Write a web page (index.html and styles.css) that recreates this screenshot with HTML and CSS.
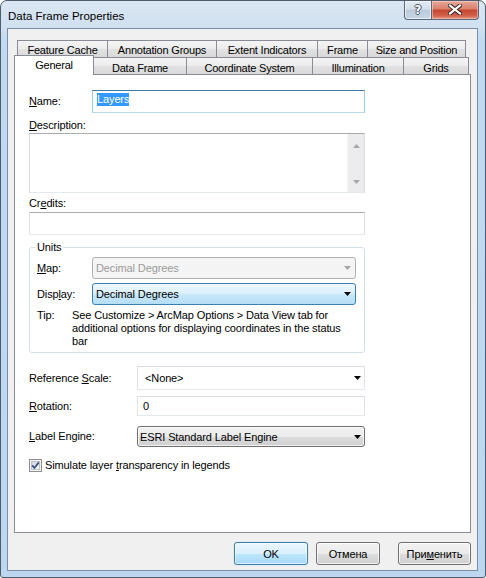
FILE: index.html
```html
<!DOCTYPE html>
<html>
<head>
<meta charset="utf-8">
<title>Data Frame Properties</title>
<link rel="stylesheet" href="styles.css">
</head>
<body>
<div class="window">
  <div class="titlebar">
    <span class="title">Data Frame Properties</span>
    <div class="caption">
      <div class="cb help"><span>?</span></div>
      <div class="cb close">
        <svg width="14" height="11" viewBox="0 0 14 11">
          <path d="M2 1.5 L12 9.5 M12 1.5 L2 9.5" stroke="#3d2a2a" stroke-width="4.2" stroke-linecap="square" fill="none"/>
          <path d="M2 1.5 L12 9.5 M12 1.5 L2 9.5" stroke="#ffffff" stroke-width="2.2" stroke-linecap="square" fill="none"/>
        </svg>
      </div>
    </div>
  </div>
  <div class="client">
    <div class="tabs">
      <div class="tab-row back">
        <div class="tab w-fc">Feature Cache</div>
        <div class="tab w-ag">Annotation Groups</div>
        <div class="tab w-ei">Extent Indicators</div>
        <div class="tab w-fr">Frame</div>
        <div class="tab w-sp">Size and Position</div>
      </div>
      <div class="tab-row front">
        <div class="tab sel w-ge">General</div>
        <div class="tab w-df">Data Frame</div>
        <div class="tab w-cs">Coordinate System</div>
        <div class="tab w-il">Illumination</div>
        <div class="tab w-gr">Grids</div>
      </div>
    </div>
    <div class="panel">
      <div class="row name-row">
        <span class="lbl lbl-name"><u>N</u>ame:</span>
        <div class="textbox focus name-input"><span class="selected">Layers</span></div>
      </div>
      <div class="caption-lbl desc-lbl"><u>D</u>escription:</div>
      <div class="textbox memo">
        <div class="scrollbar">
          <svg width="7" height="4" viewBox="0 0 7 4"><polygon points="0,4 7,4 3.5,0" fill="#a8a8a8"/></svg>
          <svg width="7" height="4" viewBox="0 0 7 4"><polygon points="0,0 7,0 3.5,4" fill="#a8a8a8"/></svg>
        </div>
      </div>
      <div class="caption-lbl credits-lbl">Cr<u>e</u>dits:</div>
      <div class="textbox credits"></div>
      <fieldset class="units">
        <legend>Units</legend>
        <div class="row urow map-row">
          <span class="lbl lbl-u"><u>M</u>ap:</span>
          <div class="combo disabled">
            <span>Decimal Degrees</span>
            <svg width="7" height="4" viewBox="0 0 7 4"><polygon points="0,0 7,0 3.5,4" fill="#a6a6a6"/></svg>
          </div>
        </div>
        <div class="row urow disp-row">
          <span class="lbl lbl-u">Disp<u>l</u>ay:</span>
          <div class="combo focused">
            <span>Decimal Degrees</span>
            <svg width="7" height="4" viewBox="0 0 7 4"><polygon points="0,0 7,0 3.5,4" fill="#000"/></svg>
          </div>
        </div>
        <div class="tip">
          <span class="tip-lbl">Tip:</span>
          <span class="tip-text">See Customize &gt; ArcMap Options &gt; Data View tab for<br>additional options for displaying coordinates in the status<br>bar</span>
        </div>
      </fieldset>
      <div class="row ref-row">
        <span class="lbl lbl-w">Reference <u>S</u>cale:</span>
        <div class="textbox combo-edit">
          <span>&lt;None&gt;</span>
          <svg width="7" height="4" viewBox="0 0 7 4"><polygon points="0,0 7,0 3.5,4" fill="#000"/></svg>
        </div>
      </div>
      <div class="row rot-row">
        <span class="lbl lbl-w"><u>R</u>otation:</span>
        <div class="textbox rot-input">0</div>
      </div>
      <div class="row le-row">
        <span class="lbl lbl-w"><u>L</u>abel Engine:</span>
        <div class="combo button-combo">
          <span>ESRI Standard Label Engine</span>
          <svg width="7" height="4" viewBox="0 0 7 4"><polygon points="0,0 7,0 3.5,4" fill="#000"/></svg>
        </div>
      </div>
      <div class="row check-row">
        <svg class="checkbox" width="13" height="13" viewBox="0 0 13 13">
          <defs>
            <linearGradient id="cbg" x1="0" y1="0" x2="1" y2="1">
              <stop offset="0" stop-color="#cfd3dc"/>
              <stop offset="1" stop-color="#f8f9fb"/>
            </linearGradient>
          </defs>
          <rect x="0.5" y="0.5" width="12" height="12" fill="#f4f4f4" stroke="#8e8f8f"/>
          <rect x="2.5" y="2.5" width="8" height="8" fill="url(#cbg)" stroke="#bfc3cb"/>
          <path d="M3.2 6.4 L5.4 9 L9.8 3.4" stroke="#394b7c" stroke-width="1.7" fill="none"/>
        </svg>
        <span class="check-text">Simulate layer <u>t</u>ransparency in legends</span>
      </div>
    </div>
    <div class="footer">
      <div class="btn default btn-ok">OK</div>
      <div class="btn btn-cancel">Отмена</div>
      <div class="btn btn-apply">При<u>м</u>енить</div>
    </div>
  </div>
</div>
</body>
</html>
```

FILE: styles.css
```css
* { box-sizing: border-box; }
html, body { margin: 0; padding: 0; background: #ffffff; }
body {
  font-family: "Liberation Sans", Arial, sans-serif;
  font-size: 11px;
  letter-spacing: -0.12px;
  color: #000;
}
u { text-decoration: underline; text-underline-offset: 1px; }

.window {
  width: 486px;
  height: 578px;
  border: 1px solid #4e5d6e;
  border-radius: 7px 7px 3px 3px;
  background: linear-gradient(180deg, #dbe7f3 0px, #cfe0f1 28px, #c1d9f1 40px, #bed7f1 100%);
  display: flex;
  flex-direction: column;
  overflow: hidden;
}

.titlebar {
  height: 27px;
  flex-shrink: 0;
  display: flex;
  justify-content: space-between;
  align-items: flex-start;
}
.title {
  font-size: 11.5px;
  letter-spacing: 0;
  line-height: 14px;
  padding: 8px 0 0 7px;
  color: #000;
}
.caption {
  display: flex;
  margin-right: 6px;
}
.cb {
  height: 19px;
  border: 1px solid #5b6778;
  border-top: none;
  display: flex;
  align-items: center;
  justify-content: center;
}
.help {
  width: 27px;
  border-right: none;
  border-radius: 0 0 0 4px;
  background: linear-gradient(180deg, #e3ebf4 0%, #d3dfeb 45%, #bccbdb 50%, #c6d6e6 100%);
  box-shadow: inset 0 0 0 1px rgba(255,255,255,0.6);
}
.help span {
  font-family: "DejaVu Sans", sans-serif;
  font-weight: bold;
  font-size: 12px;
  line-height: 12px;
  color: #ffffff;
  text-shadow: 1px 0 0 #4a5565, -1px 0 0 #4a5565, 0 1px 0 #4a5565, 0 -1px 0 #4a5565;
  margin-top: -1px;
}
.close {
  width: 48px;
  border-radius: 0 0 4px 0;
  background: linear-gradient(180deg, #e8a99b 0%, #d9806c 45%, #c6452d 50%, #d0614a 80%, #e2937f 100%);
  box-shadow: inset 0 0 0 1px rgba(255,220,210,0.5);
}
.close svg { margin-top: -1px; }

.client {
  flex: 1;
  margin: 0 7px 6px 6px;
  border: 1px solid #7a8ea6;
  background: #f0f0f0;
  display: flex;
  flex-direction: column;
}

.tabs { margin: 11px 6px 0 6px; }
.tab-row { display: flex; height: 17px; }
.tab-row.back { padding-left: 3px; }
.tab-row.front { align-items: flex-end; }
.tab {
  height: 17px;
  border: 1px solid #898c95;
  border-bottom: none;
  margin-left: -1px;
  background: linear-gradient(180deg, #f4f4f4 0%, #ececec 50%, #e1e1e1 51%, #dadada 100%);
  display: flex;
  align-items: center;
  justify-content: center;
  padding-top: 1px;
  white-space: nowrap;
  font-size: 11px;
  letter-spacing: -0.2px;
}
.tab:first-child { margin-left: 0; }
.tab-row.front .tab { padding-top: 3px; }
.tab-row.front .tab.sel {
  position: relative;
  z-index: 2;
  height: 20px;
  margin-bottom: -1px;
  background: #ffffff;
  padding-top: 0;
  padding-bottom: 1px;
}
.w-fc { width: 91px; }
.w-ag { width: 110px; }
.w-ei { width: 102px; }
.w-fr { width: 51px; }
.w-sp { width: 99px; }
.w-ge { width: 80px; }
.w-df { width: 94px; }
.w-cs { width: 127px; }
.w-il { width: 92px; }
.w-gr { width: 66px; }

.panel {
  flex: 1;
  margin: 0 6px;
  border: 1px solid #898c95;
  background: #ffffff;
  padding: 15px 0 0 14px;
}

.row { display: flex; align-items: center; }
.lbl { flex-shrink: 0; line-height: 13px; }
.textbox {
  background: #ffffff;
  border: 1px solid;
  border-color: #abadb3 #dbdfe6 #e3e9ef #e2e3ea;
}
.textbox.focus { border-color: #3d7bad #a4c9e3 #b7d9ed #a4c9e3; }

.name-row { height: 23px; }
.lbl-name { width: 63px; }
.name-input {
  width: 273px;
  height: 23px;
  padding: 2px 0 0 4px;
  display: flex;
  align-items: flex-start;
}
.selected {
  background: #3399ff;
  color: #ffffff;
  line-height: 13px;
}

.caption-lbl { line-height: 13px; }
.desc-lbl { margin-top: 6px; }
.memo {
  margin-top: 1px;
  width: 336px;
  height: 60px;
  display: flex;
  justify-content: flex-end;
  border-color: #a9abb2 #dadde3 #e3e9ef #dadde3;
}
.scrollbar {
  width: 17px;
  height: 100%;
  background: #ececec;
  border-left: 1px solid #f6f6f6;
  display: flex;
  flex-direction: column;
  align-items: center;
  justify-content: space-between;
  padding: 10px 0 8px 0;
}
.credits-lbl { margin-top: 4px; }
.credits {
  margin-top: 2px;
  width: 336px;
  height: 23px;
}

.units {
  margin: 6px 0 0 0;
  width: 336px;
  min-width: 0;
  padding: 0 8px 4px 7px;
  border: 1px solid #d5dfe5;
  border-radius: 3px;
}
.units legend {
  padding: 0 2px;
  margin-left: -2px;
  line-height: 13px;
}
.urow { height: 22px; }
.map-row { margin-top: 3px; }
.disp-row { margin-top: 4px; }
.lbl-u { width: 55px; }
.combo {
  display: flex;
  align-items: center;
  justify-content: space-between;
  border: 1px solid #707070;
  border-radius: 3px;
  padding: 0 4px 0 3px;
}
.urow .combo { width: 264px; height: 22px; }
.combo.disabled {
  border-color: #adb2b5;
  background: #f4f4f4;
  color: #9b9b9b;
}
.combo.focused {
  border-color: #3c7fb1;
  background: linear-gradient(180deg, #eef8fe 0%, #dcf0fc 45%, #c7e7f9 55%, #b5def6 100%);
}
.tip {
  display: flex;
  margin-top: 4px;
  line-height: 13px;
}
.tip-lbl { width: 35px; flex-shrink: 0; }

.lbl-w { width: 108px; }
.ref-row { margin-top: 13px; }
.combo-edit {
  width: 228px;
  height: 24px;
  display: flex;
  align-items: center;
  justify-content: space-between;
  padding: 0 3px 0 7px;
  border-color: #d9dce3 #e0e3e9 #e3e9ef #e2e3ea;
}
.rot-row { margin-top: 6px; }
.rot-input {
  width: 228px;
  height: 20px;
  display: flex;
  align-items: center;
  padding-left: 5px;
  border-color: #d9dce3 #e0e3e9 #e3e9ef #e2e3ea;
}
.le-row { margin-top: 10px; }
.button-combo {
  width: 228px;
  height: 21px;
  padding: 0 3px 0 2px;
  background: linear-gradient(180deg, #f2f2f2 0%, #ebebeb 50%, #dddddd 51%, #cfcfcf 100%);
  box-shadow: inset 0 0 0 1px rgba(255,255,255,0.7);
}
.check-row { margin-top: 12px; height: 13px; }
.checkbox { flex-shrink: 0; }
.check-text { margin-left: 3px; line-height: 13px; }

.footer {
  display: flex;
  justify-content: flex-end;
  padding: 9px 6px 5px 0;
}
.btn {
  height: 23px;
  border: 1px solid #707070;
  border-radius: 3px;
  background: linear-gradient(180deg, #f2f2f2 0%, #ebebeb 50%, #dddddd 51%, #cfcfcf 100%);
  box-shadow: inset 0 0 0 1px rgba(255,255,255,0.75);
  display: flex;
  align-items: center;
  justify-content: center;
  font-size: 11px;
}
.btn.default {
  border-color: #3c7fb1;
  background: linear-gradient(180deg, #eaf6fd 0%, #d9f0fc 50%, #bee6fd 51%, #a7d9f5 100%);
  box-shadow: inset 0 0 0 1px rgba(255,255,255,0.6), 0 0 1px #6fb7e8;
}
.btn-ok { width: 74px; }
.btn-cancel { width: 64px; margin-left: 8px; }
.btn-apply { width: 73px; margin-left: 18px; }
```
